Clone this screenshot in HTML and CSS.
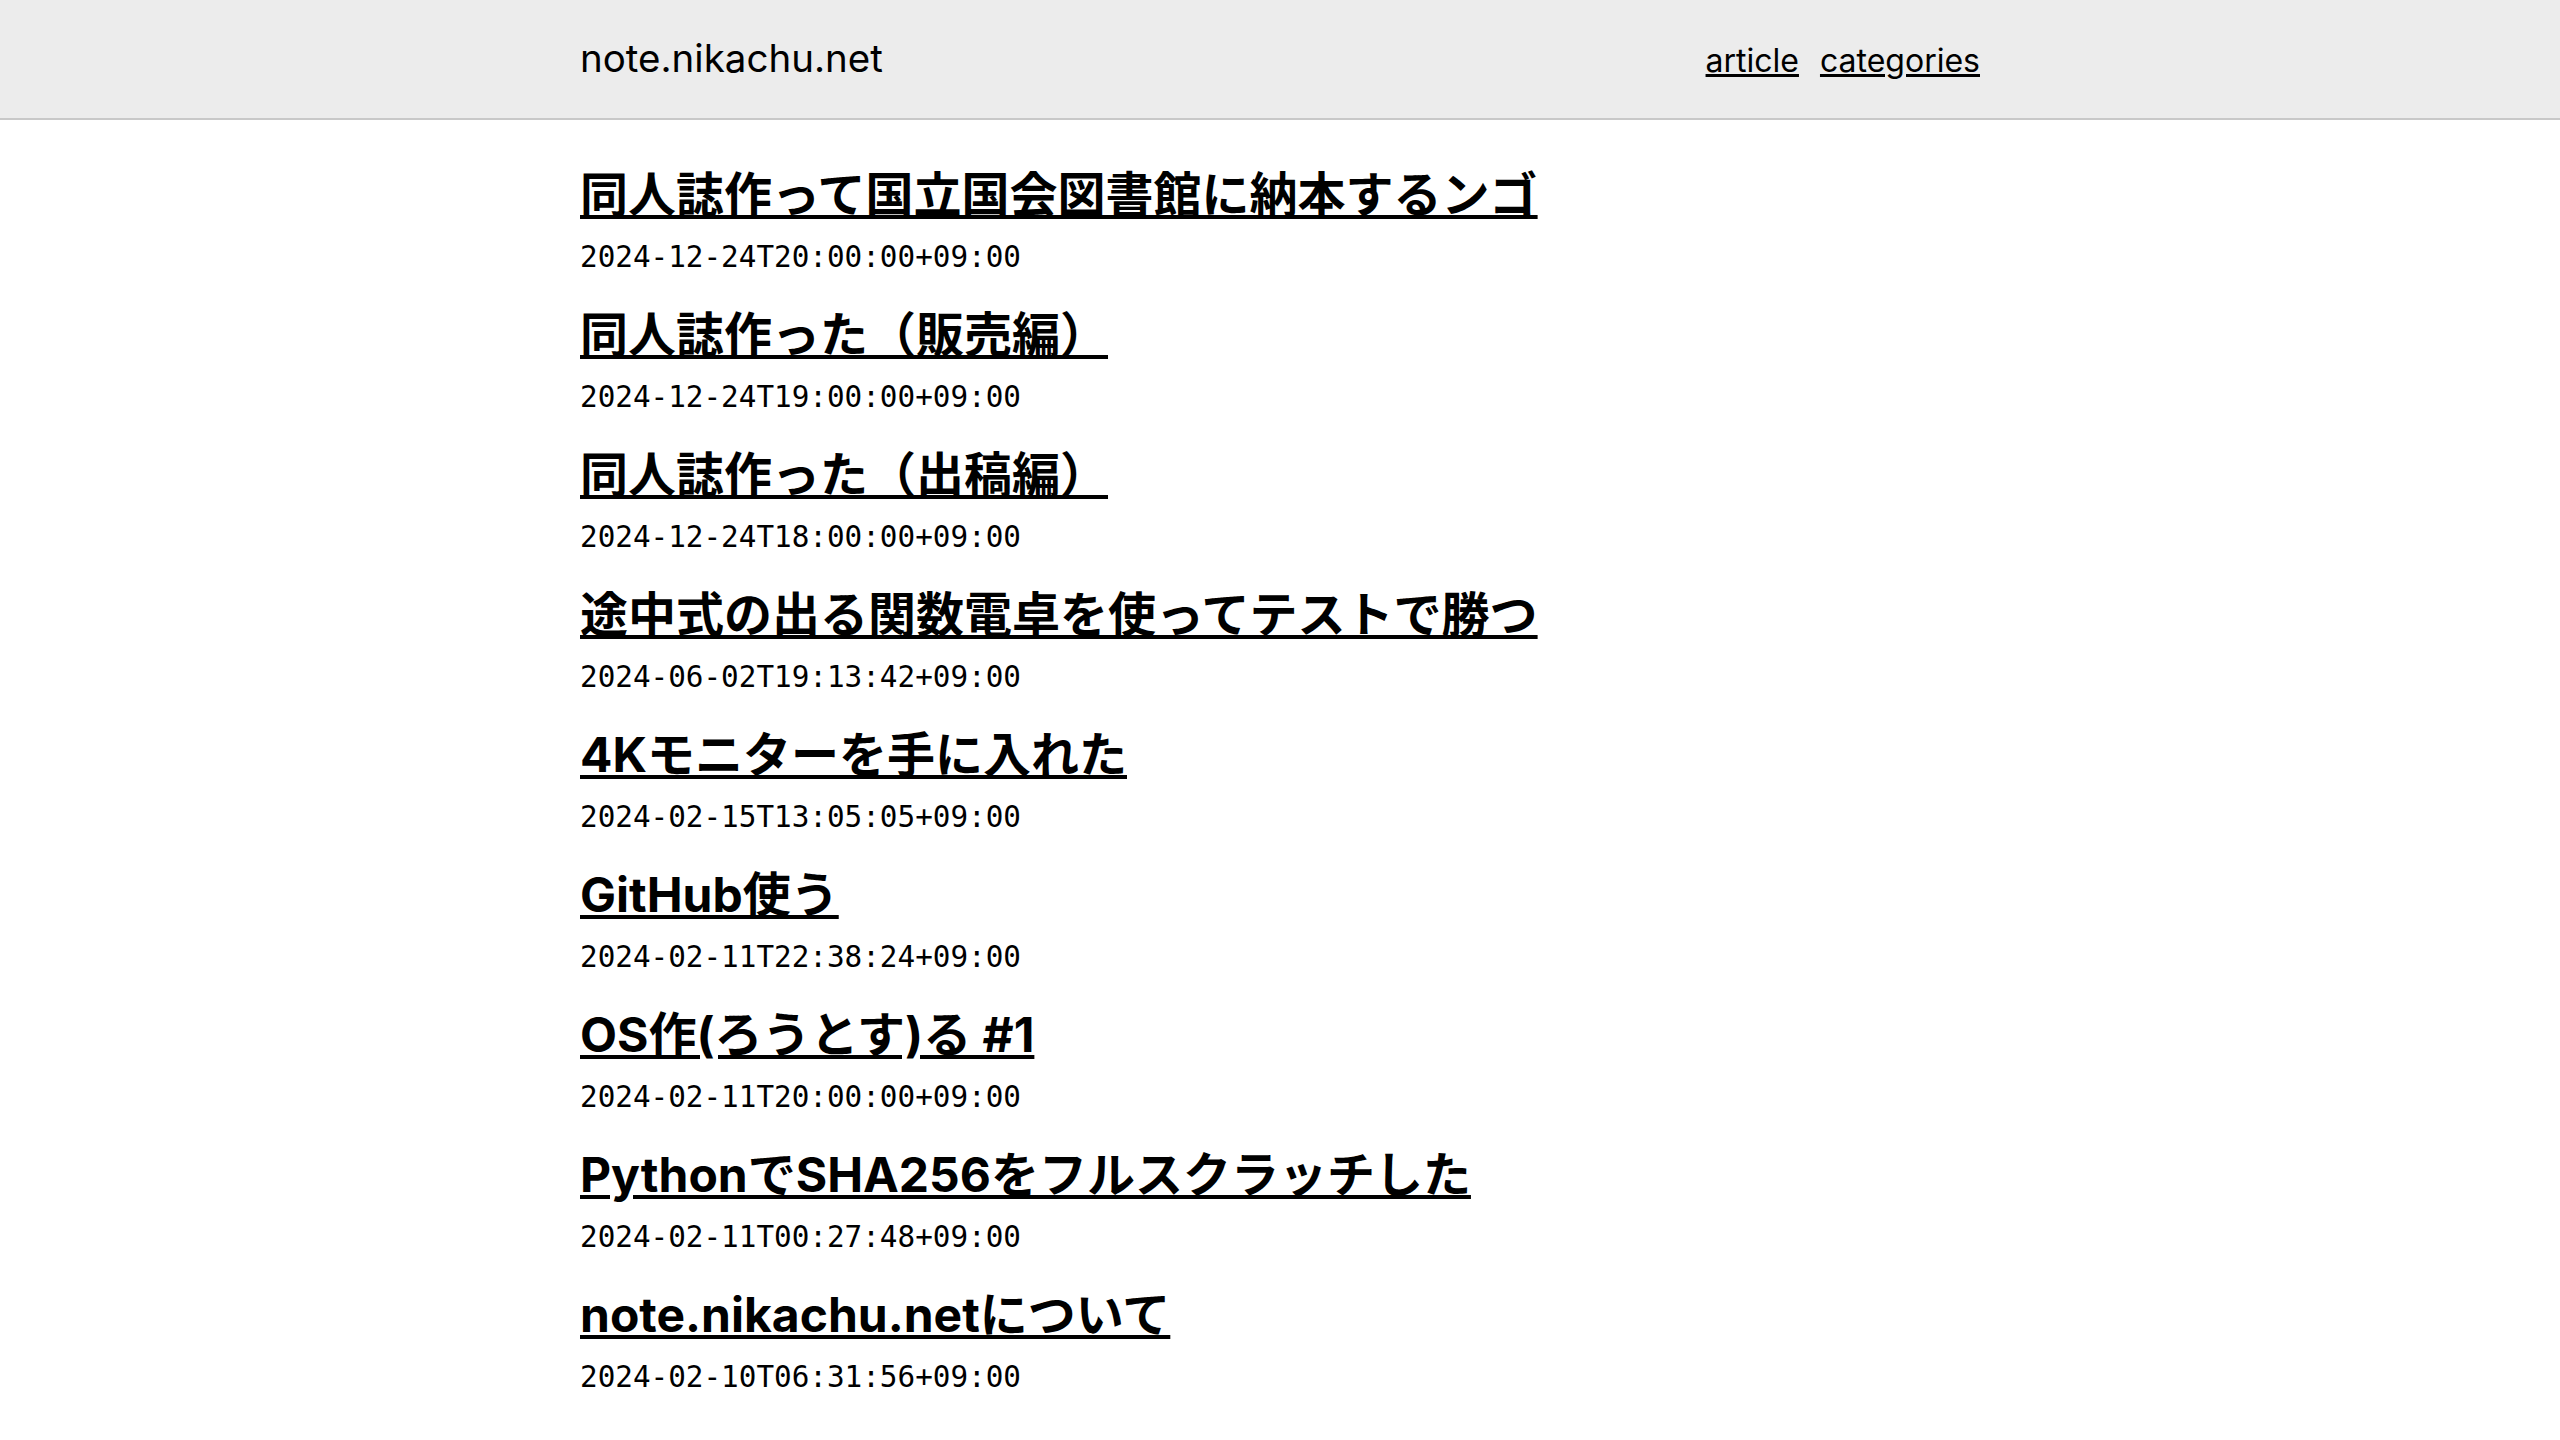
FILE: index.html
```html
<!DOCTYPE html>
<html lang="ja">
<head>
<meta charset="utf-8">
<title>note.nikachu.net</title>
<link rel="stylesheet" href="styles.css">
</head>
<body>
<header class="site-header">
  <div class="header-inner">
    <a class="logo" href="#">note.nikachu.net</a>
    <nav class="nav">
      <a href="#">article</a>
      <a href="#">categories</a>
    </nav>
  </div>
</header>
<main class="content">
  <article class="post"><h2 class="post-title"><a href="#">同人誌作って国立国会図書館に納本するンゴ</a></h2><time class="post-date">2024-12-24T20:00:00+09:00</time></article>
  <article class="post"><h2 class="post-title"><a href="#">同人誌作った（販売編）</a></h2><time class="post-date">2024-12-24T19:00:00+09:00</time></article>
  <article class="post"><h2 class="post-title"><a href="#">同人誌作った（出稿編）</a></h2><time class="post-date">2024-12-24T18:00:00+09:00</time></article>
  <article class="post"><h2 class="post-title"><a href="#">途中式の出る関数電卓を使ってテストで勝つ</a></h2><time class="post-date">2024-06-02T19:13:42+09:00</time></article>
  <article class="post"><h2 class="post-title"><a href="#">4Kモニターを手に入れた</a></h2><time class="post-date">2024-02-15T13:05:05+09:00</time></article>
  <article class="post"><h2 class="post-title"><a href="#">GitHub使う</a></h2><time class="post-date">2024-02-11T22:38:24+09:00</time></article>
  <article class="post"><h2 class="post-title"><a href="#">OS作(ろうとす)る #1</a></h2><time class="post-date">2024-02-11T20:00:00+09:00</time></article>
  <article class="post"><h2 class="post-title"><a href="#">PythonでSHA256をフルスクラッチした</a></h2><time class="post-date">2024-02-11T00:27:48+09:00</time></article>
  <article class="post"><h2 class="post-title"><a href="#">note.nikachu.netについて</a></h2><time class="post-date">2024-02-10T06:31:56+09:00</time></article>
</main>
</body>
</html>
```

FILE: styles.css
```css
html, body {
  margin: 0;
  padding: 0;
  background: #ffffff;
  color: #000000;
}

body {
  font-family: Inter, "Noto Sans CJK JP", sans-serif;
}

.site-header {
  background: #ececec;
  border-bottom: 2px solid #c8c8c8;
  height: 118px;
}

.header-inner {
  max-width: 1400px;
  height: 100%;
  margin: 0 auto;
  display: flex;
  align-items: center;
  justify-content: space-between;
}

.logo {
  font-size: 38.5px;
  line-height: 1;
  margin-top: -2px;
  color: #000;
  text-decoration: none;
}

.nav {
  display: flex;
  gap: 21px;
  font-size: 32px;
  margin-top: 2px;
}

.nav a {
  color: #000;
}

.content {
  max-width: 1400px;
  margin: 0 auto;
  padding-top: 43px;
}

.post {
  display: flex;
  flex-direction: column;
  height: 140px;
}

.post-title {
  margin: 0;
  font-size: 48px;
  font-weight: 700;
  line-height: 64px;
}

.post-title a {
  color: #000;
}

.post-date {
  font-family: "DejaVu Sans Mono", monospace;
  font-size: 29.3px;
  line-height: 40px;
  margin-top: 10px;
}
```
